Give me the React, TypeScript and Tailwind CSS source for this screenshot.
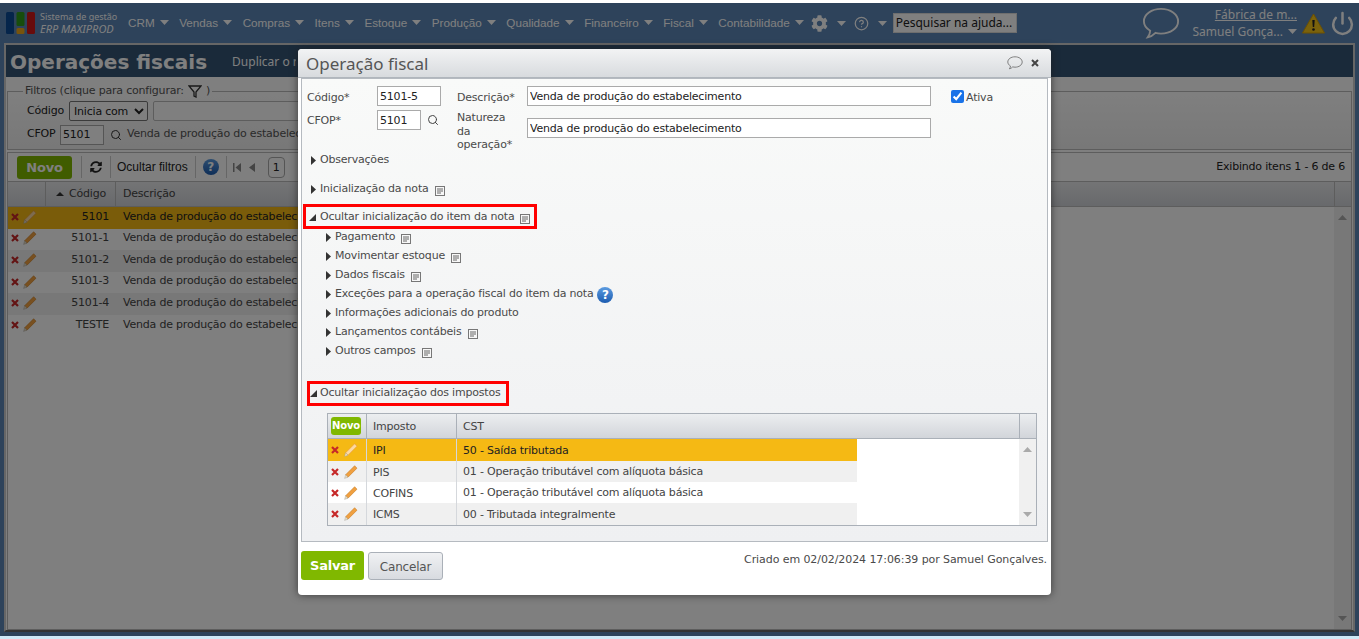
import React from "react";
import { CircleHelp, Power, Search } from "lucide-react";
import { FaCog, FaSyncAlt } from "react-icons/fa";

const menu = ["CRM", "Vendas", "Compras", "Itens", "Estoque", "Produção", "Qualidade", "Financeiro", "Fiscal", "Contabilidade"];
const rows = ["5101", "5101-1", "5101-2", "5101-3", "5101-4", "TESTE"];
const subs = [
  { label: "Pagamento", doc: true },
  { label: "Movimentar estoque", doc: true },
  { label: "Dados fiscais", doc: true },
  { label: "Exceções para a operação fiscal do item da nota", help: true },
  { label: "Informações adicionais do produto" },
  { label: "Lançamentos contábeis", doc: true },
  { label: "Outros campos", doc: true },
];
const taxes = [
  { imposto: "IPI", cst: "50 - Saída tributada" },
  { imposto: "PIS", cst: "01 - Operação tributável com alíquota básica" },
  { imposto: "COFINS", cst: "01 - Operação tributável com alíquota básica" },
  { imposto: "ICMS", cst: "00 - Tributada integralmente" },
];

const Caret = () => (
  <svg width="9" height="5" viewBox="0 0 9 5" className="shrink-0">
    <path d="M0 0h9L4.5 5z" fill="currentColor" />
  </svg>
);

const Right = () => (
  <svg width="5" height="9" viewBox="0 0 5 9" className="shrink-0">
    <path d="M0 0l5 4.5L0 9z" fill="#333" />
  </svg>
);

const Open = () => (
  <svg width="7" height="7" viewBox="0 0 7 7" className="shrink-0">
    <path d="M7 0v7H0z" fill="#333" />
  </svg>
);

const Doc = () => (
  <svg width="10" height="10" viewBox="0 0 10 10" className="shrink-0 mt-[2px]">
    <rect x="0.5" y="0.5" width="9" height="9" fill="#f7f7f7" stroke="#777" />
    <path d="M2 3h6M2 5h6M2 7h4" stroke="#666" />
  </svg>
);

const Del = () => (
  <svg width="8" height="8" viewBox="0 0 8 8" className="shrink-0">
    <path d="M1 1l6 6M7 1L1 7" stroke="#c62828" strokeWidth="2.2" />
  </svg>
);

const Pencil = ({ pale }: { pale?: boolean }) => (
  <svg width="14" height="14" viewBox="0 0 14 14" className="shrink-0">
    <path d="M10.6 0.8l2.4 2.4L4 12.2 1.6 9.8z" fill={pale ? "#fbd9a0" : "#f0a040"} stroke={pale ? "#e8963a" : "#c87a20"} strokeWidth="0.6" />
    <path d="M1.6 9.8L4 12.2 0.6 13.4z" fill="#eee0c0" stroke="#999" strokeWidth="0.4" />
  </svg>
);

const Bubble = ({ size }: { size: number }) => (
  <svg width={size} height={size * 0.85} viewBox="0 0 40 34" fill="none">
    <path
      d="M20 2c10 0 18 5.600 18 13s-8 13-18 13c-2 0-4-.2-5.800-.7C12 29.500 9.500 31.500 6 32c1.500-2 2.500-4.300 2.600-7C4.500 22.500 2 19 2 15 2 7.600 10 2 20 2z"
      stroke="currentColor"
      strokeWidth="2"
    />
  </svg>
);

const HelpDot = () => (
  <span className="size-[16px] shrink-0 rounded-full bg-gradient-to-b from-[#5b9be0] to-[#1c5cb0] text-white text-[12px] leading-[16px] font-bold text-center">?</span>
);

const Warning = () => (
  <svg width="23" height="21" viewBox="0 0 23 21">
    <path d="M11.500 1L22.500 20H.5z" fill="#f5c518" stroke="#d8a000" />
    <path d="M10.300 7h2.400l-.5 7h-1.400z" fill="#222" />
    <circle cx="11.500" cy="16.500" r="1.300" fill="#222" />
  </svg>
);

const Logo = () => (
  <svg width="30" height="22" viewBox="0 0 30 22">
    <rect x="0" y="0" width="8" height="22" rx="1.500" fill="#0a4a96" />
    <rect x="10.500" y="0" width="8" height="14" rx="1.500" fill="#2f9a18" />
    <rect x="10.500" y="16" width="8" height="6" rx="1.500" fill="#f0a818" />
    <rect x="21" y="0" width="8" height="22" rx="1.500" fill="#d01818" />
  </svg>
);

const Section = ({ children, doc }: { children: React.ReactNode; doc?: boolean }) => (
  <div className="flex items-center gap-[4px] h-[19px] pl-[9px]">
    <Right />
    <span>{children}</span>
    {doc && <span className="ml-[2px]"><Doc /></span>}
  </div>
);

const Background = () => (
  <div className="h-full flex flex-col bg-[#5c86b6]">
    <header className="h-[40px] shrink-0 flex items-center text-white font-['Liberation_Sans',sans-serif] text-[11.700px] tracking-normal">
      <div className="w-[128px] shrink-0 flex items-center pl-[6px] gap-[4px]">
        <Logo />
        <div className="leading-[11px] text-[9px] whitespace-nowrap font-['Noto_Sans',sans-serif] mt-[-2px]">
          <div>Sistema de gestão</div>
          <div className="italic text-[11px] mt-[1px]">ERP MAXIPROD</div>
        </div>
      </div>
      <nav className="flex items-center gap-[10.500px]">
        {menu.map((m) => (
          <div key={m} className="flex items-center gap-[5px] whitespace-nowrap">
            {m}
            <Caret />
          </div>
        ))}
      </nav>
      <div className="ml-[7px] flex items-center">
        <FaCog size={17} />
        <span className="ml-[9px]"><Caret /></span>
        <CircleHelp size={15} className="ml-[8px]" />
        <span className="ml-[9px]"><Caret /></span>
      </div>
      <div className="ml-[6px] w-[124px] h-[20px] bg-white text-[#222] text-[12px] pl-[2px] leading-[18px] border border-[#ddd] font-['Noto_Sans',sans-serif]">Pesquisar na ajuda...</div>
      <div className="ml-auto flex items-center pr-[4px] text-[12px]">
        <Bubble size={38} />
        <div className="ml-[9px] w-[108px] text-right leading-[17px] font-['Noto_Sans',sans-serif]">
          <div className="underline">Fábrica de m...</div>
          <div className="flex items-center justify-end gap-[5px] whitespace-nowrap">Samuel Gonça... <Caret /></div>
        </div>
        <div className="ml-[5px]"><Warning /></div>
        <Power size={25} strokeWidth={2.4} className="ml-[5px]" />
      </div>
    </header>
    <main className="flex-1 mx-[4px] mb-[4px] border-2 border-[#ccc] border-b-[#666] bg-white flex flex-col min-h-0">
      <div className="h-[32px] shrink-0 bg-[#345474] flex items-center text-white pl-[4px]">
        <h1 className="font-bold text-[20px] leading-none tracking-normal mt-[1px]">Operações fiscais</h1>
        <span className="ml-[25px] w-[64px] overflow-hidden whitespace-nowrap text-[12px] font-['Noto_Sans',sans-serif] tracking-normal mt-[2px]">Duplicar o registro</span>
      </div>
      <fieldset className="mx-[1px] mt-[6px] h-[67px] border border-[#bbb] bg-gradient-to-b from-white to-[#f0f0f0] px-[16px]">
        <legend className="ml-[-1px] px-[2px] flex items-center gap-[4px] text-[#555]">
          Filtros (clique para configurar:
          <svg width="14" height="13" viewBox="0 0 14 13"><path d="M1 1h12L8 7v5L6 11V7z" fill="none" stroke="#333" strokeWidth="1.300" /></svg>)
        </legend>
        <div className="flex items-center h-[21px] mt-[1px] pl-[3px]">
          <span className="text-[#222] w-[42px]">Código</span>
          <select className="w-[79px] h-[20px] border border-[#777] rounded-[2px] bg-white text-[#222]">
            <option>Inicia com</option>
          </select>
          <div className="ml-[5px] flex-1 h-[20px] border border-[#bbb] rounded-[2px] bg-white" />
          <div className="ml-[5px] w-[60px] h-[20px] border border-[#555] rounded-[2px]" />
          <div className="w-[294px]" />
        </div>
        <div className="flex items-center h-[20px] mt-[3px] pl-[3px]">
          <span className="text-[#222] w-[33px]">CFOP</span>
          <div className="w-[44px] h-[20px] border border-[#aaa] bg-white text-[#222] pl-[2px] leading-[18px]">5101</div>
          <Search size={12} className="ml-[6px] text-[#333]" />
          <span className="ml-[5px] text-[#555] whitespace-nowrap">Venda de produção do estabelecimento</span>
        </div>
      </fieldset>
      <div className="mx-[1px] mt-[2px] flex-1 border border-[#bbb] flex flex-col min-h-0">
        <div className="h-[28px] shrink-0 flex items-center pl-[9px] pr-[6px] text-[#222]">
          <div className="w-[55px] h-[23px] rounded-[3px] bg-[#80b800] text-white font-bold text-[13px] leading-[23px] text-center">Novo</div>
          <div className="ml-[9px] border-l border-[#ccc] h-[22px] w-[29px] flex items-center justify-center"><FaSyncAlt size={12} /></div>
          <div className="border-l border-[#ccc] h-[22px] pl-[6px] pr-[7px] leading-[22px] font-['Liberation_Sans',sans-serif] text-[12px] tracking-normal">Ocultar filtros</div>
          <div className="border-l border-[#ccc] h-[22px] px-[7px] flex items-center"><HelpDot /></div>
          <div className="border-l border-[#ccc] h-[22px] flex items-center gap-[8px] pl-[6px] text-[#888]">
            <svg width="8" height="9" viewBox="0 0 8 9"><path d="M0 0h1.500v9H0zM8 0v9L2.500 4.500z" fill="currentColor" /></svg>
            <svg width="6" height="9" viewBox="0 0 6 9"><path d="M6 0v9L0 4.500z" fill="currentColor" /></svg>
            <div className="ml-[5px] w-[17px] h-[21px] border border-[#aaa] rounded-[4px] text-center leading-[19px] text-[#222]">1</div>
          </div>
          <span className="ml-auto text-[#222]">Exibindo itens 1 - 6 de 6</span>
        </div>
        <div className="h-[26px] shrink-0 flex border-y border-[#bbb] bg-gradient-to-b from-[#e8e9eb] to-[#d0d3d8] text-[#444]">
          <div className="w-[38px] border-r border-[#bbb]" />
          <div className="w-[70px] border-r border-[#bbb] flex items-center pl-[10px] gap-[5px] leading-[24px]">
            <svg width="8" height="4" viewBox="0 0 8 4"><path d="M0 4h8L4 0z" fill="#333" /></svg>
            Código
          </div>
          <div className="flex-1 pl-[7px] leading-[24px]">Descrição</div>
          <div className="w-[17px] border-l border-[#bbb]" />
        </div>
        <div className="flex-1 flex min-h-0">
          <div className="flex-1">
            {rows.map((r, i) => (
              <div key={r} className={"flex w-[700px] h-[21.600px] items-center pb-[2px] " + (i === 0 ? "bg-[#f5b914] text-[#222]" : i % 2 === 1 ? "bg-white text-[#444]" : "bg-[#f0f0f0] text-[#444]")}>
                <div className="w-[38px] flex items-center gap-[4px] pl-[3px]">
                  <Del />
                  <Pencil pale={i === 0} />
                </div>
                <div className="w-[70px] text-right pr-[7px]">{r}</div>
                <div className="pl-[7px] whitespace-nowrap">Venda de produção do estabelecimento</div>
              </div>
            ))}
          </div>
          <div className="w-[17px] bg-[#f0f0f0] flex flex-col justify-between items-center py-[8px] text-[#aaa]">
            <span className="rotate-180"><Caret /></span>
            <Caret />
          </div>
        </div>
      </div>
    </main>
  </div>
);

const TaxTable = () => (
  <div className="ml-[25px] mt-[7px] w-[710px] h-[113px] border border-[#aab0b8] bg-white flex flex-col">
    <div className="h-[25px] shrink-0 flex bg-gradient-to-b from-[#eceef0] to-[#d2d5da] border-b border-[#aab0b8] text-[#444]">
      <div className="w-[39px] border-r border-[#aab0b8] flex items-center pl-[3px]">
        <div className="w-[30px] h-[18px] rounded-[3px] bg-[#80b800] text-white font-bold text-[10px] leading-[18px] text-center">Novo</div>
      </div>
      <div className="w-[90px] border-r border-[#aab0b8] pl-[6px] leading-[26px]">Imposto</div>
      <div className="flex-1 pl-[6px] leading-[26px]">CST</div>
      <div className="w-[17px] border-l border-[#aab0b8]" />
    </div>
    <div className="flex-1 flex min-h-0">
      <div className="flex-1">
        {taxes.map((t, i) => (
          <div
            key={t.imposto}
            className={"flex w-[529px] items-center " + (i === 0 ? "h-[22px] bg-[#f5b914] text-[#222]" : i === 1 ? "h-[21px] bg-[#f0f0f0] text-[#444]" : i === 2 ? "h-[21px] bg-white text-[#444]" : "h-[22px] bg-[#f0f0f0] text-[#444]")}
          >
            <div className="w-[39px] h-full border-r border-[#d5d8dc] flex items-center gap-[5px] pl-[3px]">
              <Del />
              <Pencil pale={i === 0} />
            </div>
            <div className="w-[90px] h-full border-r border-[#d5d8dc] pl-[6px] leading-[23px]">{t.imposto}</div>
            <div className="pl-[6px] whitespace-nowrap leading-[23px]">{t.cst}</div>
          </div>
        ))}
      </div>
      <div className="w-[17px] bg-[#f0f0f0] flex flex-col justify-between items-center py-[8px] text-[#aaa]">
        <span className="rotate-180"><Caret /></span>
        <Caret />
      </div>
    </div>
  </div>
);

const Modal = () => (
  <div className="absolute left-[298px] top-[49px] w-[753px] h-[546px] rounded-[4px] bg-white shadow-[0_0_8px_rgba(30,30,30,0.7)] flex flex-col text-[#4a4a4a]">
    <div className="h-[29px] shrink-0 rounded-t-[4px] bg-gradient-to-b from-[#f2f3f4] to-[#d8dbde] flex items-center pl-[8px] pr-[12px] border-b border-[#b0b6bc]">
      <span className="text-[17px] font-['Noto_Sans',sans-serif] text-[#555] mt-[2px] tracking-normal">Operação fiscal</span>
      <span className="ml-auto text-[#666]"><Bubble size={16} /></span>
      <svg width="8" height="8" viewBox="0 0 8 8" className="ml-[8px]"><path d="M1 1l6 6M7 1L1 7" stroke="#444" strokeWidth="2" /></svg>
    </div>
    <div className="mx-[3px] h-[464px] shrink-0 border border-[#b5bac0] bg-gradient-to-b from-[#f9faf9] to-[#eff0f2]">
      <div className="flex pl-[5px] pt-[7px] h-[20px] box-content">
        <span className="w-[70px] leading-[24px]">Código*</span>
        <input readOnly value="5101-5" className="w-[64px] h-[20px] border border-[#aaa] bg-white px-[2px] text-[#222]" />
        <span className="ml-[16px] w-[70px] leading-[24px]">Descrição*</span>
        <input readOnly value="Venda de produção do estabelecimento" className="w-[404px] h-[20px] border border-[#aaa] bg-white px-[2px] text-[#222]" />
        <input type="checkbox" readOnly checked className="ml-[20px] mt-[4px] size-[13px] accent-[#1a73e8]" />
        <span className="ml-[2px] leading-[24px]">Ativa</span>
      </div>
      <div className="flex pl-[5px] pt-[4px] h-[42px] box-content">
        <span className="w-[70px] leading-[22px]">CFOP*</span>
        <input readOnly value="5101" className="w-[44px] h-[20px] border border-[#aaa] bg-white px-[2px] text-[#222]" />
        <Search size={12} className="ml-[6px] mt-[4px] text-[#444]" />
        <span className="ml-[18px] w-[70px] h-[42px] leading-[13.500px] pt-[1px]">Natureza<br />da<br />operação*</span>
        <input readOnly value="Venda de produção do estabelecimento" className="mt-[8px] w-[404px] h-[20px] border border-[#aaa] bg-white px-[2px] text-[#222]" />
      </div>
      <div className="mt-[-1px]"><Section>Observações</Section></div>
      <div className="mt-[10px]"><Section doc>Inicialização da nota</Section></div>
      <div className="ml-[1px] mt-[5px] w-[234px] h-[25px] border-[3px] border-[#f00] flex items-center gap-[4px] pl-[3px] pt-[2px] whitespace-nowrap">
        <Open />
        <span>Ocultar inicialização do item da nota</span>
        <span className="ml-[1px]"><Doc /></span>
      </div>
      <div className="ml-[12px] mt-[-1px]">
        {subs.map((s) => (
          <div key={s.label} className="h-[19px] flex items-center gap-[4px] pl-[12px]">
            <Right />
            <span>{s.label}</span>
            {s.doc && <span className="ml-[2px]"><Doc /></span>}
            {s.help && <HelpDot />}
          </div>
        ))}
      </div>
      <div className="ml-[5px] mt-[20px] w-[202px] h-[25px] border-[3px] border-[#f00] flex items-center gap-[3px] whitespace-nowrap">
        <Open />
        <span>Ocultar inicialização dos impostos</span>
      </div>
      <TaxTable />
    </div>
    <div className="flex px-[3px] mt-[9px]">
      <div className="w-[63px] h-[29px] rounded-[3px] bg-[#80b800] text-white font-bold text-[13px] leading-[29px] text-center">Salvar</div>
      <div className="ml-[4px] mt-[1px] w-[75px] h-[28px] rounded-[3px] border border-[#aab0b8] bg-gradient-to-b from-[#f0f1f3] to-[#d8dbe0] text-[12px] leading-[28px] text-center text-[#555]">Cancelar</div>
      <span className="ml-auto mr-[1px] mt-[1px] leading-[15px] tracking-[-0.08px]">Criado em 02/02/2024 17:06:39 por Samuel Gonçalves.</span>
    </div>
  </div>
);

export default function App() {
  return (
    <div className="relative w-[1359px] h-[639px] overflow-hidden bg-[#cfe9f7] font-['DejaVu_Sans',sans-serif] text-[11px] tracking-[-0.2px]">
      <div className="h-[3px] bg-white" />
      <div className="h-[633px]">
        <Background />
      </div>
      {/* dims the page behind the dialog */}
      <div className="absolute left-0 right-0 top-[3px] h-[633px] bg-black/50" />
      <Modal />
    </div>
  );
}
